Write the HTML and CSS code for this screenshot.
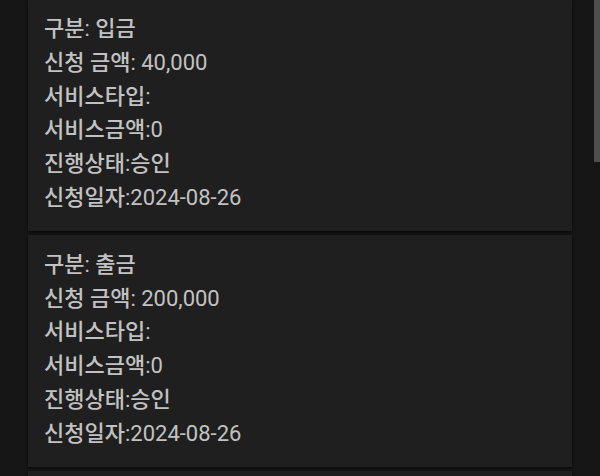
FILE: index.html
```html
<!DOCTYPE html>
<html lang="ko">
<head>
    <meta charset="UTF-8">
    <meta name="viewport" content="width=device-width, initial-scale=1.0">
    <title>신청 내역</title>
    <link rel="stylesheet" href="styles.css">
</head>
<body>
    <div class="list">
        <div class="card">
            <div class="row"><span class="ko">구분</span>: <span class="ko">입금</span></div>
            <div class="row"><span class="ko">신청 금액</span>: 40,000</div>
            <div class="row"><span class="ko">서비스타입</span>:</div>
            <div class="row"><span class="ko">서비스금액</span>:0</div>
            <div class="row"><span class="ko">진행상태</span>:<span class="ko">승인</span></div>
            <div class="row"><span class="ko">신청일자</span>:2024-08-26</div>
        </div>
        <div class="card">
            <div class="row"><span class="ko">구분</span>: <span class="ko">출금</span></div>
            <div class="row"><span class="ko">신청 금액</span>: 200,000</div>
            <div class="row"><span class="ko">서비스타입</span>:</div>
            <div class="row"><span class="ko">서비스금액</span>:0</div>
            <div class="row"><span class="ko">진행상태</span>:<span class="ko">승인</span></div>
            <div class="row"><span class="ko">신청일자</span>:2024-08-26</div>
        </div>
        <!-- siguiente tarjeta, apenas asoma abajo -->
        <div class="card card-next"></div>
    </div>
    <div class="scroll-thumb"></div>
</body>
</html>
```

FILE: styles.css
```css
body {
    margin: 0;
    background: #161616;
    font-family: Roboto, "Noto Sans CJK KR", sans-serif;
    overflow: hidden;
    height: 476px;
}

.list {
    display: flex;
    flex-direction: column;
    gap: 4px;
    margin-top: -1px;
    padding: 0 28px;
}

.card {
    background: #1f1f1f;
    padding: 13px 16px 16px;
    box-shadow: 0 1px 3px rgba(0, 0, 0, 0.7);
}

.card-next {
    height: 200px;
}

.row {
    font-size: 22px;
    line-height: 33.8px;
    color: #c2c2c2;
    white-space: nowrap;
}

.ko {
    font-weight: 500;
}

/* barra de scroll */
.scroll-thumb {
    position: absolute;
    top: 0;
    right: 0;
    width: 6px;
    height: 162px;
    background: #4e4e4e;
}
```
